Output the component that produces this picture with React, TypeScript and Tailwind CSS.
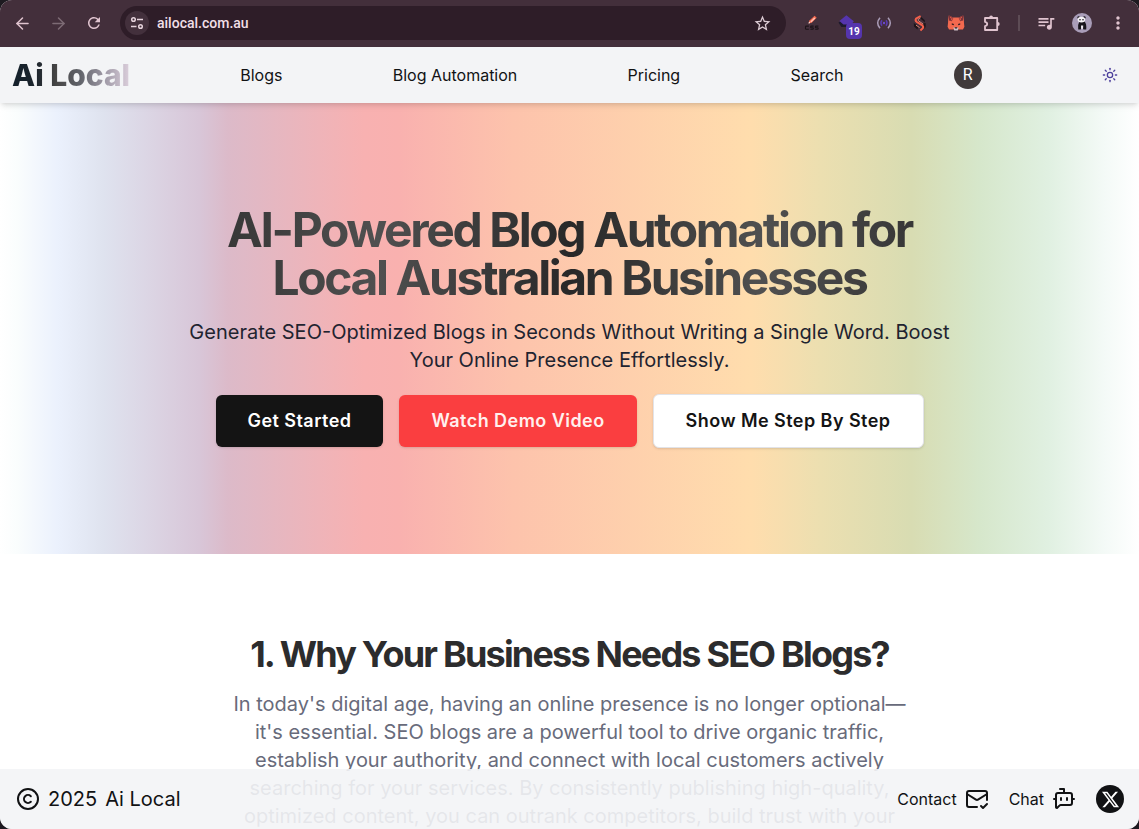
import React from 'react';
import { ArrowLeft, ArrowRight, BotMessageSquare, Copyright, MailCheck, Sun } from 'lucide-react';
import { MdMoreVert, MdQueueMusic, MdRefresh, MdStarBorder } from 'react-icons/md';
import { FaXTwitter } from 'react-icons/fa6';

const toolButton = 'flex h-9 w-9 shrink-0 items-center justify-center text-[#e0c4cf]';

function TuneIcon() {
  return (
    <svg width="14" height="14" viewBox="0 0 14 14" fill="none" stroke="#e6d3dc" strokeWidth="1.5" aria-hidden="true">
      <circle cx="3.5" cy="3.5" r="1.8" />
      <path d="M7 3.5h6M1 10.5h5.5" />
      <circle cx="10.5" cy="10.5" r="1.8" />
    </svg>
  );
}

function CssPencilIcon() {
  return (
    <svg width="20" height="20" viewBox="0 0 20 20" aria-hidden="true">
      <path d="M6.6 10.6l.6-2.8 5.4-5 2.1 2-5 5z" fill="#f4694f" />
      <path d="M8.3 8.4l4-3.9 1 .9-4 3.9z" fill="#ffc9bc" />
      <path d="M6.6 10.6l.4-1.8 1.3 1.2z" fill="#fff" />
      <g fill="none" stroke="#1c1318" strokeWidth="1.1">
        <path d="M6.8 13.1H4.4q-.9 0-.9.9v1.4q0 .9.9.9h2.4" />
        <path d="M11.6 13.1H9.4q-.8 0-.8.8t.8.8h1.2q.8 0 .8.8t-.8.8H8.4" />
        <path d="M16.4 13.1h-2.2q-.8 0-.8.8t.8.8h1.2q.8 0 .8.8t-.8.8h-2.2" />
      </g>
    </svg>
  );
}

function BroadcastIcon() {
  return (
    <svg width="16" height="16" viewBox="0 0 16 16" fill="none" aria-hidden="true">
      <path d="M4 2.8Q-.6 8 4 13.2M12 2.8Q16.6 8 12 13.2" stroke="#a99bb5" strokeWidth="1.5" />
      <path d="M6 5.2Q3.8 8 6 10.8M10 5.2Q12.2 8 10 10.8" stroke="#5a3bb0" strokeWidth="1.4" />
      <circle cx="8" cy="8" r="1.2" fill="#6a48d0" />
    </svg>
  );
}

function RibbonIcon() {
  return (
    <svg width="16" height="18" viewBox="0 0 16 18" aria-hidden="true">
      <path d="M7.4 1.6l5.4 4.6v2.2L9.2 5.2zM1.8 9l4.6 3.6-1 3L2 12.4zM10.6 9.6l3-.6v4.2l-3.4 3.2z" fill="#1d1519" />
      <path d="M8.6 2L4 4.6q-1 2 .6 3.2l5.8 3.6q1.4 1.2.4 2.8L8.4 16.4" fill="none" stroke="#f5604b" strokeWidth="2" strokeLinejoin="round" />
      <path d="M8.4 3.6L6 5.6q0 1 1 1.6l4.4 3M4 11.2l3.6 2.4" fill="none" stroke="#ff9a86" strokeWidth=".8" />
    </svg>
  );
}

function FoxIcon() {
  return (
    <svg width="18" height="18" viewBox="0 0 18 18" aria-hidden="true">
      <path d="M1.8 1.4l4.4 2.2h5.6l4.4-2.2.6 4.4.2 3.4.4 3.6-1.4 2.8H2L.6 12.8 1 9.2l.2-3.4z" fill="#f4694f" />
      <path d="M1.8 1.4l4.6 2.4-1.6 3.4-2.8-.8zM16.2 1.4l-4.6 2.4 1.6 3.4 2.8-.8z" fill="#7c3038" />
      <path d="M3 3.4l2.2 1-1 2M15 3.4l-2.2 1 1 2" fill="none" stroke="#f4694f" strokeWidth=".8" />
      <path d="M4.8 9.2l2.2.8-.2 1.2-2-.4zM13.2 9.2l-2.2.8.2 1.2 2-.4z" fill="#3a2024" />
      <path d="M6.4 13.4h5.2l-.8 3H7.2z" fill="#cdbfc6" />
      <path d="M7.6 13.2h2.8l-.4 1.4H8z" fill="#2a1a1c" />
    </svg>
  );
}

function PuzzleIcon() {
  return (
    <svg width="18" height="18" viewBox="0 0 18 18" fill="none" aria-hidden="true">
      <path d="M2 4h12.2v12H2v-3.9q2.2-.4 2.2-2.1T2 7.9z" stroke="#e0c4cf" strokeWidth="1.8" strokeLinejoin="round" />
      <path d="M6.2 3.4a1.9 1.9 0 0 1 3.8 0zM14.8 8.1a1.9 1.9 0 0 1 0 3.8z" fill="#e0c4cf" />
    </svg>
  );
}

function PandaAvatar() {
  return (
    <svg width="20" height="20" viewBox="0 0 20 20" aria-hidden="true">
      <circle cx="10" cy="10" r="10" fill="#a99db8" />
      <path d="M7.4 8.6Q5.4 12 6.2 16.4h2.6l.6-2.6h1.2l.8 2.6h2.8q.6-5-1.6-7.8z" fill="#17141a" />
      <path d="M9 12.4h2.2l-.2 3.4H9.2z" fill="#eeeaf0" />
      <circle cx="6.6" cy="4.4" r="1.2" fill="#17141a" />
      <circle cx="12.4" cy="4.4" r="1.2" fill="#17141a" />
      <ellipse cx="9.4" cy="6.6" rx="3.8" ry="2.9" fill="#f4f1f5" />
      <circle cx="8" cy="6.8" r=".8" fill="#17141a" />
      <circle cx="11" cy="6.8" r=".8" fill="#17141a" />
    </svg>
  );
}

function BrowserBar() {
  return (
    <div className="flex h-[47px] shrink-0 items-center bg-[#432f3b] pr-[3px] pb-px pl-1">
      <button type="button" aria-label="Back" className={toolButton}>
        <ArrowLeft size={19} strokeWidth={1.9} />
      </button>
      <button type="button" aria-label="Forward" className="flex h-9 w-9 shrink-0 items-center justify-center text-[#7d6b75]">
        <ArrowRight size={19} strokeWidth={1.9} />
      </button>
      <button type="button" aria-label="Reload" className={toolButton}>
        <MdRefresh size={18} />
      </button>
      <div className="mx-2 flex h-[34px] min-w-0 flex-1 items-center gap-2 rounded-full bg-[#2e1d28] pr-3.5 pl-[5px]">
        <button type="button" aria-label="Site settings" className="flex h-6 w-6 items-center justify-center rounded-full bg-[#43303c]">
          <TuneIcon />
        </button>
        <input
          type="text"
          aria-label="Address"
          defaultValue="ailocal.com.au"
          className="min-w-0 flex-1 bg-transparent font-[Roboto,sans-serif] text-sm font-medium text-[#f1dfe7] outline-none"
        />
        <button type="button" aria-label="Bookmark" className="text-[#dccbd4]">
          <MdStarBorder size={19} />
        </button>
      </div>
      <button type="button" aria-label="CSS editor" className={toolButton}>
        <CssPencilIcon />
      </button>
      <button type="button" aria-label="Blocked items" className="relative flex h-9 w-9 shrink-0 items-center justify-center pr-1">
        <svg width="18" height="18" viewBox="0 0 18 18" aria-hidden="true">
          <path d="M1.5 8.6L5 6.4l9 1V13H4.4z" fill="#1d1a2c" />
          <path d="M9.4 1.2l7.4 6-2.4 3.4H6.4L2.4 7z" fill="#5535ad" />
        </svg>
        <span className="absolute right-1 bottom-0.5 flex h-4 w-4 items-center justify-center rounded-sm bg-[#5535ad] font-[Roboto,sans-serif] text-[10px] font-bold text-white">
          19
        </span>
      </button>
      <button type="button" aria-label="Broadcast" className={toolButton}>
        <BroadcastIcon />
      </button>
      <button type="button" aria-label="Ribbon" className={toolButton}>
        <RibbonIcon />
      </button>
      <button type="button" aria-label="Wallet" className={toolButton}>
        <FoxIcon />
      </button>
      <button type="button" aria-label="Extensions" className={toolButton}>
        <PuzzleIcon />
      </button>
      <span className="mx-2 h-4 w-0.5 bg-[#5d4c55]" />
      <button type="button" aria-label="Media" className={toolButton}>
        <MdQueueMusic size={20} />
      </button>
      <button type="button" aria-label="Profile" className={toolButton}>
        <PandaAvatar />
      </button>
      <button type="button" aria-label="Menu" className={toolButton}>
        <MdMoreVert size={20} />
      </button>
    </div>
  );
}

function SiteNav() {
  return (
    <nav className="relative z-10 flex h-14 shrink-0 items-center justify-between bg-[#f3f4f6] pr-[11px] pl-3 text-[#111214] shadow-md">
      <a
        href="#home"
        className="bg-[linear-gradient(90deg,#13202b_0%,#1c242c_20%,#474646_38%,#62646b_58%,#a39daa_80%,#dccfdc_100%)] bg-clip-text text-3xl font-extrabold text-transparent"
      >
        Ai Local
      </a>
      <a href="#blogs">Blogs</a>
      <a href="#automation">Blog Automation</a>
      <a href="#pricing">Pricing</a>
      <a href="#search">Search</a>
      <button type="button" aria-label="Account" className="flex h-7 w-7 items-center justify-center rounded-full bg-[#403a3b] font-[Roboto,sans-serif] text-base text-white">
        R
      </button>
      <button type="button" aria-label="Toggle theme" className="flex h-9 w-9 items-center justify-center text-[#4c3f9c]">
        <Sun size={16} strokeWidth={2} />
      </button>
    </nav>
  );
}

function Hero() {
  return (
    <section className="flex min-h-[451px] shrink-0 flex-col items-center justify-center bg-[linear-gradient(90deg,#ffffff_0%,#fafdfd_1.5%,#ebf1fd_5%,#dfe3ef_9%,#d8c6d8_17.5%,#dcbac9_20%,#f8b1b1_32%,#f9b1af_35%,#fdc3ac_45%,#ffddad_66%,#ecdfb0_72%,#d8dcb2_80%,#d6e7cb_86%,#e0f0e1_92%,#f4faf7_97%,#ffffff_100%)] px-6 pb-1 text-center">
      <h1 className="w-full max-w-3xl bg-[linear-gradient(90deg,#303030_0%,#505050_25%,#282828_50%,#505050_75%,#303030_100%)] bg-clip-text text-5xl leading-none font-bold tracking-tighter text-transparent">
        AI-Powered Blog Automation for Local Australian Businesses
      </h1>
      <p className="mt-4 max-w-3xl text-xl text-[#1f2430]">
        Generate SEO-Optimized Blogs in Seconds Without Writing a Single Word. Boost Your Online Presence Effortlessly.
      </p>
      <div className="mt-5 flex flex-wrap items-center justify-center gap-4 text-lg font-semibold tracking-wide">
        <button type="button" className="h-[52px] rounded-md bg-[#141414] px-8 text-white shadow-sm">
          Get Started
        </button>
        <button type="button" className="h-[52px] rounded-md bg-[#fa3e40] px-8 text-[#fff0ee] shadow-sm">
          Watch Demo Video
        </button>
        <button type="button" className="h-[54px] rounded-md border border-[#e2e3e8] bg-white px-8 text-[#141414] shadow-sm">
          Show Me Step By Step
        </button>
      </div>
    </section>
  );
}

function SiteFooter() {
  return (
    <footer className="absolute inset-x-0 bottom-0 flex h-[60px] items-center justify-between bg-[#f3f4f6]/90 pr-[15px] pl-4 text-[#111214]">
      <div className="flex items-center gap-2 text-xl">
        <Copyright size={24} />
        <span>2025</span>
        <span>Ai Local</span>
      </div>
      <div className="flex items-center gap-5">
        <a href="#contact" className="flex items-center gap-2">
          Contact
          <MailCheck size={24} />
        </a>
        <a href="#chat" className="flex items-center gap-2">
          Chat
          <BotMessageSquare size={24} />
        </a>
        <a href="#x" aria-label="X" className="flex h-7 w-7 items-center justify-center rounded-full bg-[#111214] text-white">
          <FaXTwitter size={19} />
        </a>
      </div>
    </footer>
  );
}

export default function App() {
  return (
    <div className="h-screen bg-[#1d1a20]">
      <div className="relative flex h-full flex-col overflow-hidden rounded-xl bg-white font-[Inter,sans-serif]">
        <BrowserBar />
        <SiteNav />
        <main className="min-h-0 flex-1 overflow-hidden">
          <Hero />
          <section className="flex flex-col items-center px-6 pt-20 text-center">
            <h2 className="text-4xl font-bold tracking-tighter text-[#2c2c2d]">1. Why Your Business Needs SEO Blogs?</h2>
            <p className="mt-4 max-w-[680px] text-xl text-[#686b7b]">
              In today's digital age, having an online presence is no longer optional—it's essential. SEO blogs are a
              powerful tool to drive organic traffic, establish your authority, and connect with local customers
              actively searching for your services. By consistently publishing high-quality, optimized content, you can
              outrank competitors, build trust with your audience, and grow your business.
            </p>
          </section>
        </main>
        <SiteFooter />
      </div>
    </div>
  );
}
